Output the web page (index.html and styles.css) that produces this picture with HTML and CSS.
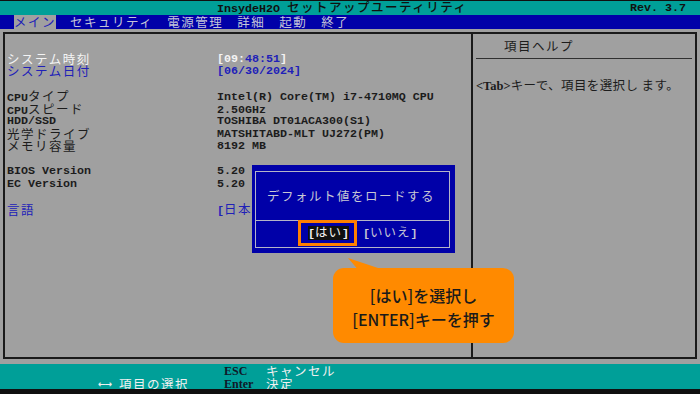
FILE: index.html
```html
<!DOCTYPE html>
<html lang="ja">
<head>
<meta charset="utf-8">
<title>InsydeH2O セットアップユーティリティ</title>
<link rel="stylesheet" href="styles.css">
</head>
<body>
<div class="screen">
  <header class="titlebar">
    <span class="title">InsydeH2O <span class="jp">セットアップユーティリティ</span></span>
    <span class="rev">Rev. 3.7</span>
  </header>
  <nav class="menubar">
    <span class="menu-item active jp">メイン</span>
    <span class="menu-item jp">セキュリティ</span>
    <span class="menu-item jp">電源管理</span>
    <span class="menu-item jp">詳細</span>
    <span class="menu-item jp">起動</span>
    <span class="menu-item jp">終了</span>
  </nav>
  <main class="frame">
    <section class="items">
      <div class="row"><span class="label white jp">システム時刻</span><span class="value"><span class="white">[09:</span><span class="blue">48:51</span><span class="white">]</span></span></div>
      <div class="row blue"><span class="label jp">システム日付</span><span class="value">[06/30/2024]</span></div>
      <div class="row"></div>
      <div class="row"><span class="label">CPU<span class="jp">タイプ</span></span><span class="value">Intel(R) Core(TM) i7-4710MQ CPU</span></div>
      <div class="row"><span class="label">CPU<span class="jp">スピード</span></span><span class="value">2.50GHz</span></div>
      <div class="row"><span class="label">HDD/SSD</span><span class="value">TOSHIBA DT01ACA300(S1)</span></div>
      <div class="row"><span class="label jp">光学ドライブ</span><span class="value">MATSHITABD-MLT UJ272(PM)</span></div>
      <div class="row"><span class="label jp">メモリ容量</span><span class="value">8192 MB</span></div>
      <div class="row"></div>
      <div class="row"><span class="label">BIOS Version</span><span class="value">5.20</span></div>
      <div class="row"><span class="label">EC Version</span><span class="value">5.20</span></div>
      <div class="row"></div>
      <div class="row blue"><span class="label jp">言語</span><span class="value">[<span class="jp">日本語</span>]</span></div>
    </section>
    <aside class="help">
      <div class="help-title jp">項目ヘルプ</div>
      <p class="help-text"><b class="tag">&lt;Tab&gt;</b><span class="jp2">キーで、項目を選択し ます。</span></p>
    </aside>
  </main>
  <footer class="footer">
    <span class="f-key r1">ESC</span><span class="f-desc r1 jp">キャンセル</span>
    <span class="f-arrow r2">←→</span><span class="f-desc2 r2 jp">項目の選択</span>
    <span class="f-key r2">Enter</span><span class="f-desc r2 jp">決定</span>
  </footer>
  <div class="bottom-edge"></div>

  <div class="dialog">
    <div class="dialog-inner">
      <div class="dialog-msg jp">デフォルト値をロードする</div>
      <div class="dialog-buttons">
        <span class="btn selected">[<span class="jp">はい</span>]</span>
        <span class="btn">[<span class="jp">いいえ</span>]</span>
      </div>
    </div>
    <div class="focus-ring"></div>
  </div>

  <div class="callout">
    <svg class="callout-tail" width="72" height="14" viewBox="0 0 72 14"><path d="M0,0 Q18,6 30,10 L72,10 L72,14 L12,14 Z" fill="#ff8a00"/></svg>
    <p class="callout-text">[はい]を選択し<br>[ENTER]キーを押す</p>
  </div>
</div>
</body>
</html>
```
FILE: styles.css
```css
* { box-sizing: border-box; }
html, body { margin: 0; padding: 0; }
body {
  width: 700px;
  height: 394px;
  overflow: hidden;
  background: #a0a0a0;
  font: bold 11.67px/12.5px "Liberation Mono", "Noto Sans CJK JP", monospace;
  color: #1c1c1c;
}
.screen {
  position: relative;
  width: 700px;
  height: 394px;
  display: flex;
  flex-direction: column;
}
.jp {
  font-family: "Noto Sans CJK JP", sans-serif;
  font-weight: 400;
  font-size: 12.5px;
  line-height: 12.5px;
  letter-spacing: 1.5px;
}
.titlebar {
  height: 15px;
  border-top: 1px solid #101010;
  background: #009f98;
  color: #101010;
  display: flex;
  align-items: center;
  padding: 1px 14px 0 217px;
}
.titlebar .jp { font-weight: 500; color: #101010; }
.rev { margin-left: auto; }
.menubar {
  height: 14px;
  background: #0000a8;
  display: flex;
  gap: 14px;
  padding-left: 14px;
  align-items: stretch;
}
.menu-item {
  color: #c4c4d8;
  display: flex;
  align-items: center;
  line-height: 14px;
}
.menu-item.active {
  background: #a0a0a0;
  color: #2020b8;
}
.frame {
  margin: 3px 3px 0 3px;
  height: 327px;
  border: 2px solid #1a1a1a;
  display: flex;
}
.items {
  width: 466px;
  padding: 18.75px 0 0 2px;
}
.row {
  height: 12.5px;
  display: grid;
  grid-template-columns: 210px 1fr;
  white-space: nowrap;
  align-items: center;
}
.label, .value { line-height: 12.5px; }
.white { color: #f4f4f4; }
.blue { color: #2020b8; }
.help {
  flex: 1;
  border-left: 2px solid #1a1a1a;
}
.help-title {
  height: 25px;
  margin: 0 3px;
  border-bottom: 1px solid #303030;
  padding-left: 28px;
  display: flex;
  align-items: center;
  color: #1c1c1c;
}
.help-text {
  margin: 20px 0 0 0;
  padding-left: 3px;
  line-height: 12.5px;
  white-space: nowrap;
}
.tag {
  font-family: "Liberation Serif", serif;
  font-weight: bold;
  font-size: 12.5px;
}
.jp2 {
  font-family: "Noto Sans CJK JP", sans-serif;
  font-weight: 400;
  font-size: 12.5px;
  letter-spacing: 0.4px;
}
.footer {
  margin-top: 5px;
  height: 25px;
  background: #009f98;
  padding-top: 1px;
  display: grid;
  grid-template-columns: 98px 21px 105px 42px 1fr;
  grid-template-rows: 12.5px 12.5px;
  align-items: center;
  white-space: nowrap;
}
.r1 { grid-row: 1; }
.r2 { grid-row: 2; }
.f-arrow { grid-column: 2; font-size: 9px; letter-spacing: -1px; color: #f0f0f0; font-family: "DejaVu Sans", sans-serif; }
.f-desc2 { grid-column: 3; color: #f0f0f0; }
.f-key {
  grid-column: 4;
  font-family: "Liberation Serif", serif;
  font-weight: bold;
  font-size: 12px;
  color: #101828;
}
.f-desc { grid-column: 5; color: #f0f0f0; }
.bottom-edge {
  flex: 1;
  background: #101010;
}
.dialog {
  position: absolute;
  left: 252px;
  top: 165px;
  width: 203px;
  height: 88px;
  background: #0000a8;
  padding: 6px 5px 5px 3px;
}
.dialog-inner {
  height: 100%;
  border: 1px solid #b4b4c8;
  display: flex;
  flex-direction: column;
}
.dialog-msg {
  height: 49px;
  border-bottom: 1px solid #b4b4c8;
  color: #c8c8d4;
  padding-left: 11px;
  display: flex;
  align-items: center;
}
.dialog-buttons {
  flex: 1;
  display: flex;
  align-items: center;
  gap: 14px;
  padding-left: 52px;
  padding-bottom: 2px;
}
.btn {
  color: #c8c8d4;
  line-height: 11px;
  white-space: nowrap;
}
.btn .jp { letter-spacing: 1px; line-height: 11px; }
.btn.selected {
  background: #101010;
  color: #f4f4f4;
}
.focus-ring {
  position: absolute;
  left: 46px;
  top: 55px;
  width: 59px;
  height: 26px;
  border: 3px solid #ff8000;
}
.callout {
  position: absolute;
  left: 333px;
  top: 268px;
  width: 181px;
  height: 75px;
  background: #ff8a00;
  border-radius: 11px;
  display: flex;
  align-items: center;
  justify-content: center;
}
.callout-tail {
  position: absolute;
  left: 15px;
  top: -10px;
}
.callout-text {
  margin: 0;
  text-align: center;
  font-family: "Noto Sans CJK JP", sans-serif;
  font-weight: 500;
  font-size: 16px;
  line-height: 24px;
  color: #1a1a1a;
  padding-top: 2px;
}
```
